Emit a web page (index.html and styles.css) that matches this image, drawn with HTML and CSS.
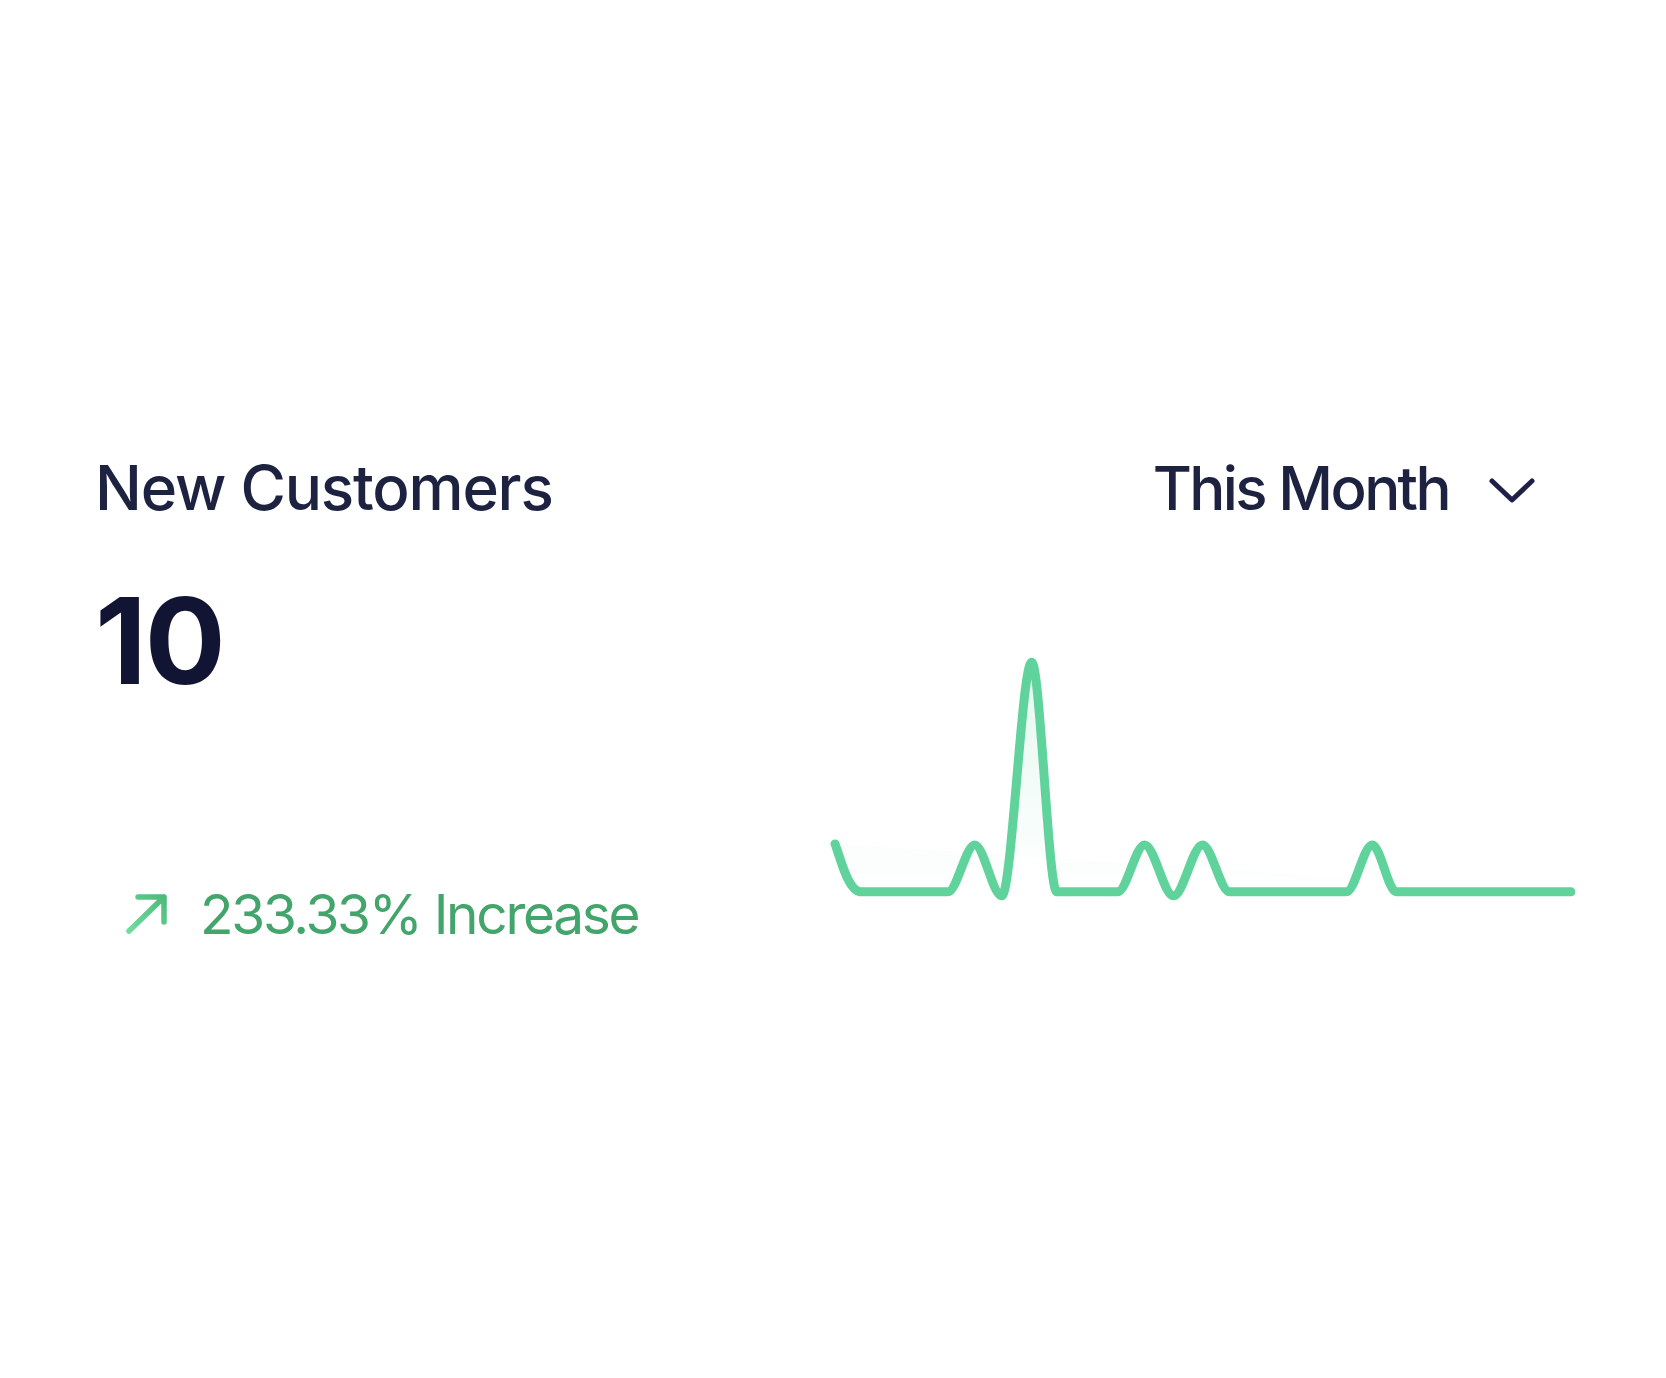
FILE: index.html
```html
<!DOCTYPE html>
<html lang="en">
<head>
<meta charset="utf-8">
<title>New Customers</title>
<link rel="stylesheet" href="styles.css">
</head>
<body>
<main class="card">
  <header class="card-head">
    <h2 class="card-title">New Customers</h2>
    <button class="range" type="button">
      <span class="range-label">This Month</span>
      <svg class="chevron" width="46" height="26" viewBox="0 0 46 26" aria-hidden="true">
        <polyline points="3,4 23,23 43,4" fill="none" stroke="currentColor" stroke-width="5" stroke-linecap="round" stroke-linejoin="round"/>
      </svg>
    </button>
  </header>
  <section class="card-body">
    <div class="stats">
      <div class="value">10</div>
      <div class="change">
        <svg class="arrow" width="44" height="42" viewBox="0 0 44 42" aria-hidden="true">
          <defs>
            <linearGradient id="arrowGrad" x1="0" y1="1" x2="1" y2="0">
              <stop offset="0" stop-color="#70dc9f"/>
              <stop offset="1" stop-color="#4cbb7c"/>
            </linearGradient>
          </defs>
          <path d="M4,38 L39,4 M13,4 H39 V29" fill="none" stroke="url(#arrowGrad)" stroke-width="5.5" stroke-linecap="round" stroke-linejoin="round"/>
        </svg>
        <span class="change-text">233.33% Increase</span>
      </div>
    </div>
    <svg class="spark" width="750" height="270" viewBox="0 0 750 270" aria-hidden="true">
      <defs>
        <linearGradient id="sparkFill" x1="0" y1="0" x2="0" y2="1">
          <stop offset="0" stop-color="#62d39e" stop-opacity="0.16"/>
          <stop offset="1" stop-color="#62d39e" stop-opacity="0"/>
        </linearGradient>
      </defs>
      <path d="M9,204 C15,220 22,250 34,252 L122,252 C131,252 140,205 149,205 C158,205 167,256 176,256 C186,256 196,22 206,22 C214.3,22 222.7,252 231,252 L292,252 C301,252 310,205 319,205 C328.7,205 338.3,256 348,256 C357.7,256 367.3,205 377,205 C386,205 395,252 404,252 L521,252 C529.7,252 538.3,205 547,205 C555,205 563,252 571,252 L746,252 Z" fill="url(#sparkFill)" stroke="none"/>
      <path d="M9,204 C15,220 22,250 34,252 L122,252 C131,252 140,205 149,205 C158,205 167,256 176,256 C186,256 196,22 206,22 C214.3,22 222.7,252 231,252 L292,252 C301,252 310,205 319,205 C328.7,205 338.3,256 348,256 C357.7,256 367.3,205 377,205 C386,205 395,252 404,252 L521,252 C529.7,252 538.3,205 547,205 C555,205 563,252 571,252 L746,252" fill="none" stroke="#60d39c" stroke-width="9" stroke-linejoin="round" stroke-linecap="round"/>
    </svg>
  </section>
</main>
</body>
</html>
```

FILE: styles.css
```css
html, body {
  margin: 0;
  padding: 0;
  background: #ffffff;
}

body {
  font-family: Inter, "Noto Sans", "Liberation Sans", sans-serif;
  color: #1d2240;
}

.card {
  box-sizing: border-box;
  width: 1666px;
  min-height: 1378px;
  padding: 450px 91px 0 95px;
  background: #ffffff;
}

.card-head {
  display: flex;
  justify-content: space-between;
  align-items: center;
  margin-right: 40px;
}

.card-title {
  margin: 0;
  font-size: 62px;
  line-height: 76px;
  font-weight: 500;
  letter-spacing: -1.2px;
  color: #1d2240;
}

.range {
  display: flex;
  align-items: center;
  gap: 40px;
  padding: 0;
  border: 0;
  background: transparent;
  font-family: inherit;
  color: #1d2240;
}

.range-label {
  font-size: 60px;
  line-height: 76px;
  font-weight: 500;
  letter-spacing: -2.6px;
}

.chevron {
  display: block;
  margin-top: 4px;
  color: #1e2048;
}

.card-body {
  display: flex;
  align-items: flex-start;
  margin-top: 55px;
}

.stats {
  flex: 0 0 731px;
  display: flex;
  flex-direction: column;
}

.value {
  font-size: 120px;
  line-height: 120px;
  font-weight: 700;
  color: #121433;
  letter-spacing: -2px;
}

.change {
  display: flex;
  align-items: center;
  gap: 31px;
  margin-top: 179px;
  padding-left: 30px;
}

.arrow {
  display: block;
}

.change-text {
  font-size: 55px;
  line-height: 68px;
  font-weight: 400;
  letter-spacing: -2.3px;
  color: #43a46c;
}

.spark {
  display: block;
  margin-top: 59px;
}
```
